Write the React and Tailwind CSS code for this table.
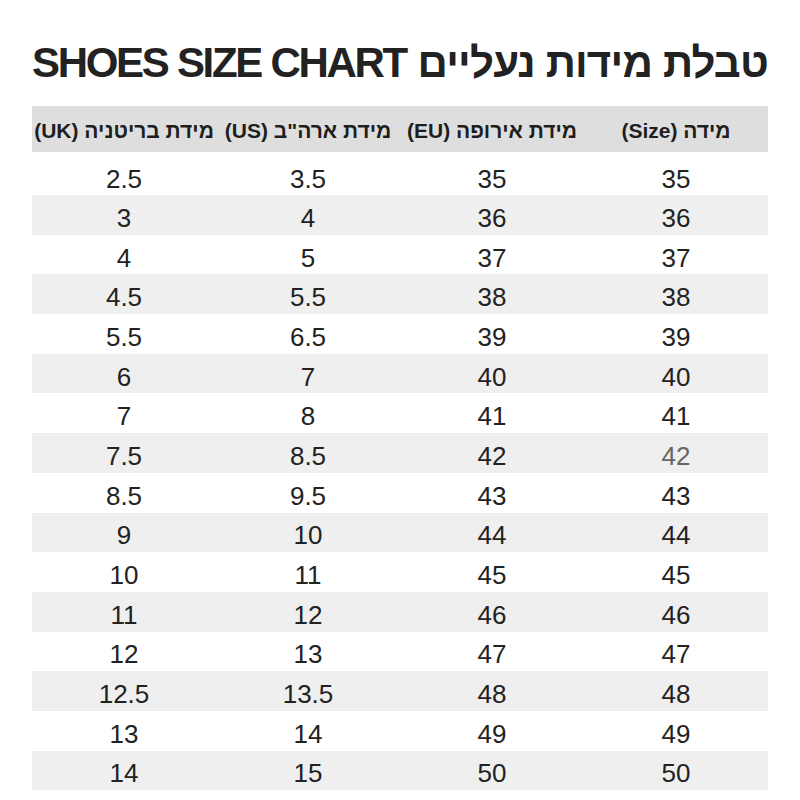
import React from 'react';

const ROWS = [
  ['35', '35', '3.5', '2.5'],
  ['36', '36', '4', '3'],
  ['37', '37', '5', '4'],
  ['38', '38', '5.5', '4.5'],
  ['39', '39', '6.5', '5.5'],
  ['40', '40', '7', '6'],
  ['41', '41', '8', '7'],
  ['42', '42', '8.5', '7.5'],
  ['43', '43', '9.5', '8.5'],
  ['44', '44', '10', '9'],
  ['45', '45', '11', '10'],
  ['46', '46', '12', '11'],
  ['47', '47', '13', '12'],
  ['48', '48', '13.5', '12.5'],
  ['49', '49', '14', '13'],
  ['50', '50', '15', '14'],
];

const HEADERS = ['מידה (Size)', 'מידת אירופה (EU)', 'מידת ארה"ב (US)', 'מידת בריטניה (UK)'];

export default function App() {
  return (
    <div className="w-[800px] h-[800px] bg-white text-[#222] font-['Liberation_Sans',Arial,sans-serif]">
      {/* Title */}
      <h1
        dir="rtl"
        className="pt-[42px] text-center text-[42px] leading-none font-bold text-[#222] whitespace-nowrap"
      >
        <span className="tracking-[-0.8px]">טבלת מידות נעליים</span>{' '}
        <span className="tracking-[-2.3px]">SHOES SIZE CHART</span>
      </h1>

      {/* Table */}
      <div dir="rtl" className="mx-[32px] mt-[22px]">
        <div className="grid grid-cols-4 h-[46px] bg-[#dedede] items-center pt-[3px]">
          {HEADERS.map(h => (
            <div key={h} className="text-center text-[21px] font-bold text-[#1e1e1e] whitespace-nowrap">
              {h}
            </div>
          ))}
        </div>

        {ROWS.map((r, i) => (
          <div
            key={i}
            className={
              'grid grid-cols-4 items-center ' +
              (i === 0 ? 'h-[43px] pt-[11px] ' : 'h-[39.7px] pt-[6px] ') +
              (i % 2 === 1 ? 'bg-[#efefef]' : 'bg-white')
            }
          >
            {r.map((v, j) => (
              <div
                key={j}
                className={'text-center text-[26px] leading-none ' + (i === 7 && j === 0 ? 'text-[#666]' : 'text-[#222]')}
              >
                {v}
              </div>
            ))}
          </div>
        ))}
      </div>
    </div>
  );
}
